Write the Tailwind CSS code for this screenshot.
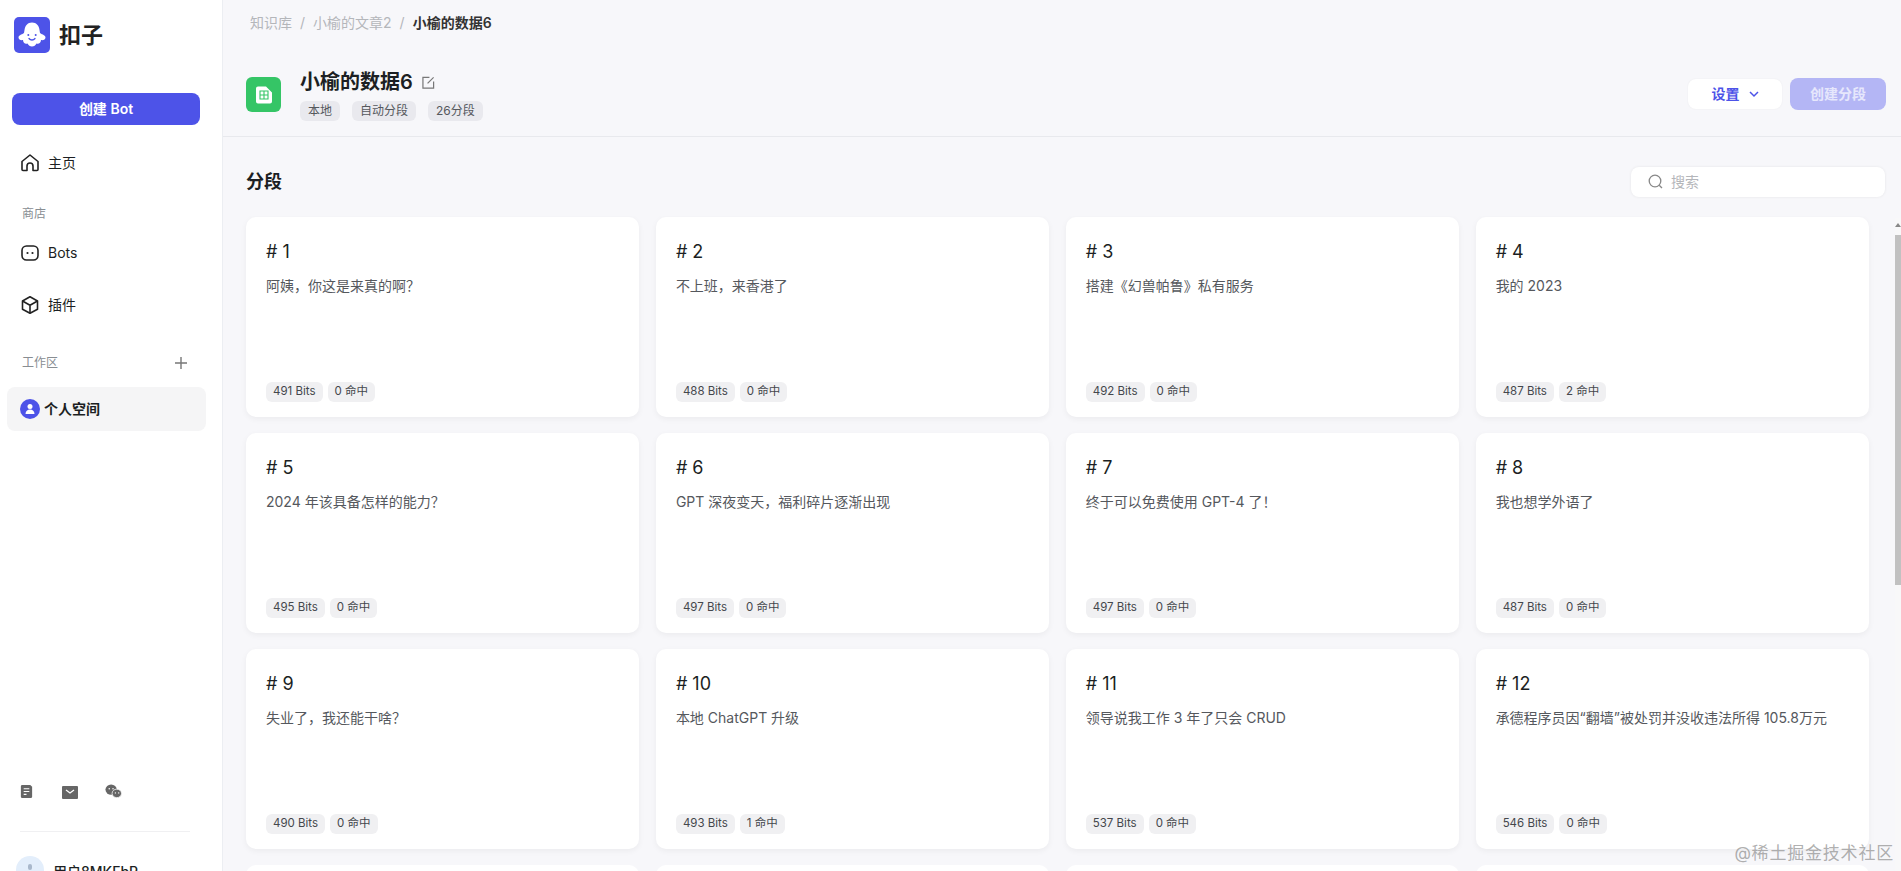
<!DOCTYPE html>
<html lang="zh-CN">
<head>
    <meta charset="UTF-8">
    <meta name="viewport" content="width=device-width, initial-scale=1.0">
    <title>扣子 - 小榆的数据6</title>
    <script src="https://cdn.jsdelivr.net/npm/@tailwindcss/browser@4"></script>
</head>
<body class="h-[871px] overflow-hidden bg-[#f7f7fa] font-['Inter','Noto_Sans_CJK_SC',sans-serif] text-[#1c1f23]">
    <div class="flex h-full">
        <!-- 侧边栏 -->
        <aside class="flex h-full w-[223px] shrink-0 flex-col border-r border-[#eceef2] bg-white">
            <div class="flex items-center pl-[14px] pt-[17px]">
                <svg class="size-9" viewBox="0 0 36 36">
                    <rect width="36" height="36" rx="5" fill="#4d53e8"/>
                    <path d="M18 5.500c-4.500 0-7 3.200-7.500 7.500l-.5 3c-.5 1-5.500 1.800-5.500 4.500 0 2 2.200 3 4.500 2.500 0 3 2.500 4.500 4.500 3.500 1 2 2.500 3 4.500 3s3.500-1 4.500-3c2 1 4.500-.5 4.500-3.500 2.300.5 4.500-.5 4.500-2.500 0-2.700-5-3.500-5.500-4.500l-.5-3c-.5-4.300-3-7.500-7.500-7.500z" fill="#fff"/>
                    <circle cx="14.300" cy="18" r="1" fill="#4d53e8"/>
                    <circle cx="21.700" cy="18" r="1" fill="#4d53e8"/>
                    <path d="M15 21.500c1.500 2 4.500 2 6 0" fill="none" stroke="#4d53e8" stroke-width="1.300" stroke-linecap="round"/>
                </svg>
                <span class="ml-[9px] text-[22px] font-bold leading-9 text-[#222]">扣子</span>
            </div>
            <button class="mx-3 mt-[40px] h-8 w-[188px] shrink-0 rounded-lg bg-[#4d53e8] text-sm font-semibold text-white">创建 Bot</button>

            <a class="mt-[26px] flex h-[24px] items-center pl-5 text-sm">
                <svg class="mr-2 size-[20px]" viewBox="0 0 20 20" fill="none" stroke="#222" stroke-width="1.600" stroke-linejoin="round"><path d="M2 8.500 10 2l8 6.500v8a1 1 0 0 1-1 1H13v-4.500a3 3 0 0 0-6 0v4.500H3a1 1 0 0 1-1-1z"/></svg>
                主页
            </a>
            <div class="mt-[29px] pl-[22px] text-xs leading-5 text-[#888d92]">商店</div>

            <a class="mt-[17px] flex h-[24px] items-center pl-5 text-sm">
                <svg class="mr-2 size-[20px]" viewBox="0 0 20 20" fill="none"><rect x="2" y="3" width="16" height="14" rx="4.500" stroke="#222" stroke-width="1.600"/><circle cx="7.500" cy="10" r="1.100" fill="#222"/><circle cx="12.500" cy="10" r="1.100" fill="#222"/></svg>
                Bots
            </a>
            <a class="mt-[28px] flex h-[24px] items-center pl-5 text-sm">
                <svg class="mr-2 size-[20px]" viewBox="0 0 20 20" fill="none" stroke="#222" stroke-width="1.600" stroke-linejoin="round"><path d="M10 1.800 17.500 6v8.200L10 18.300l-7.500-4.100V6z"/><path d="M2.500 6 10 10.200 17.500 6M10 10.200v8"/></svg>
                插件
            </a>

            <div class="mt-[36px] flex items-center justify-between pl-[22px] pr-[35px] text-xs leading-5 text-[#888d92]">
                工作区
                <svg class="size-3" viewBox="0 0 12 12" stroke="#777" stroke-width="1.400"><path d="M6 0v12M0 6h12"/></svg>
            </div>
            <div class="ml-[7px] mt-[14px] flex h-[44px] w-[199px] shrink-0 items-center rounded-lg bg-[#f5f5f6] pl-[13px] text-sm font-semibold">
                <svg class="mr-1 size-5" viewBox="0 0 20 20"><circle cx="10" cy="10" r="10" fill="#4d53e8"/><circle cx="10" cy="7.500" r="2.500" fill="#fff"/><path d="M5.500 15c0-3 2-4.500 4.500-4.500s4.500 1.500 4.500 4.500z" fill="#fff"/></svg>
                个人空间
            </div>

            <div class="mt-auto flex items-center pl-[19px]">
                <svg class="size-[15px]" viewBox="0 0 16 16"><path d="M2 2.500A1.500 1.500 0 0 1 3.500 1H12l2 2v10.500a1.500 1.500 0 0 1-1.500 1.500h-9A1.500 1.500 0 0 1 2 13.500z" fill="#666"/><path d="M5 5h6M5 8h6M5 11h3" stroke="#fff" stroke-width="1.200"/></svg>
                <svg class="ml-[28px] size-4" viewBox="0 0 16 16"><rect y="2" width="16" height="13" rx="1" fill="#666"/><path d="m4 6 4 3 4-3" fill="none" stroke="#fff" stroke-width="1.300"/></svg>
                <svg class="ml-[27px] size-[17px]" viewBox="0 0 18 18"><ellipse cx="6.500" cy="7" rx="6" ry="5.500" fill="#666"/><ellipse cx="12.500" cy="11" rx="5" ry="4.500" fill="#666" stroke="#fff" stroke-width=".8"/><circle cx="4.500" cy="6" r=".8" fill="#fff"/><circle cx="8.500" cy="6" r=".8" fill="#fff"/><circle cx="11" cy="10.500" r=".7" fill="#fff"/><circle cx="14.500" cy="10.500" r=".7" fill="#fff"/></svg>
            </div>
            <div class="ml-5 mt-[31px] h-px w-[170px] shrink-0 bg-[#f0f0f2]"></div>
            <div class="mt-[24px] flex h-[15px] shrink-0 items-start overflow-hidden pl-4">
                <div class="flex size-7 shrink-0 justify-center rounded-full bg-[#e3eefb] pt-[8px]">
                    <span class="h-[6px] w-[4px] rounded-full bg-[#a9b8cb]"></span>
                </div>
                <span class="ml-[9px] mt-[6px] text-sm font-medium leading-5">用户8MKFbR</span>
            </div>
        </aside>

        <!-- 主内容 -->
        <main class="relative flex h-full min-w-0 flex-1 flex-col">
            <nav class="flex h-[46px] shrink-0 items-center pl-[27px] text-sm text-[#b4b6ba]">
                <span>知识库</span>
                <span class="mx-2">/</span>
                <span>小榆的文章2</span>
                <span class="mx-2">/</span>
                <span class="font-semibold text-[#333]">小榆的数据6</span>
            </nav>

            <header class="flex h-[91px] shrink-0 items-start justify-between border-b border-[#e8e9ed] pl-[23px] pr-[15px]">
                <div class="flex">
                    <div class="mt-[31px] flex size-[35px] items-center justify-center rounded-[6px] bg-[#35c566]">
                        <svg class="size-[18px]" viewBox="0 0 18 18">
                            <path d="M1 2.500A2 2 0 0 1 3 .5h8l6 6v9a2 2 0 0 1-2 2H3a2 2 0 0 1-2-2z" fill="#fff"/>
                            <path d="M5 5h8v8H5zM9 5v8M5 9h8" fill="none" stroke="#35c566" stroke-width="1.100"/>
                        </svg>
                    </div>
                    <div class="ml-[19px] mt-[22px]">
                        <div class="flex items-center">
                            <span class="text-[20px] font-semibold leading-[28px] text-[#1c1f23]">小榆的数据6</span>
                            <svg class="ml-[9px] size-[13px]" viewBox="0 0 14 14" fill="none" stroke="#777" stroke-width="1.300"><path d="M8 1.500H1v11.500h11.500V6"/><path d="M6 8 12.500 1.500"/></svg>
                        </div>
                        <div class="mt-[5px] flex gap-[12px] text-xs text-[#55585d]">
                            <span class="flex h-5 items-center rounded-md bg-[#e9e9ee] px-2">本地</span>
                            <span class="flex h-5 items-center rounded-md bg-[#e9e9ee] px-2">自动分段</span>
                            <span class="flex h-5 items-center rounded-md bg-[#e9e9ee] px-2">26分段</span>
                        </div>
                    </div>
                </div>
                <div class="mt-[32px] flex items-center gap-2">
                    <button class="flex h-[30px] w-[94px] items-center justify-center rounded-lg bg-white text-sm font-semibold text-[#4d53e8] shadow-[0_0_2px_rgba(0,0,0,0.06)]">
                        设置
                        <svg class="ml-[9px] size-[10px]" viewBox="0 0 10 10" fill="none" stroke="#4d53e8" stroke-width="1.500"><path d="m1 3 4 4 4-4"/></svg>
                    </button>
                    <button class="h-[32px] w-[96px] rounded-lg bg-[#b4b6f5] text-sm font-semibold text-[#e6e7fc]">创建分段</button>
                </div>
            </header>

            <div class="flex h-[79px] shrink-0 items-center justify-between pl-[23px] pr-[16px] pt-[10px]">
                <h2 class="text-[18px] font-semibold">分段</h2>
                <div class="flex h-[30px] w-[254px] items-center rounded-lg bg-white pl-[17px] text-sm text-[#b4b6ba] shadow-[0_0_3px_rgba(0,0,0,0.08)]">
                    <svg class="mr-2 size-[15px]" viewBox="0 0 15 15" fill="none" stroke="#888" stroke-width="1.300"><circle cx="7" cy="7" r="5.800"/><path d="m11.200 11.200 2.800 2.800"/></svg>
                    搜索
                </div>
            </div>

            <!-- 分段卡片 -->
            <div class="grid min-h-0 flex-1 grid-cols-4 content-start gap-x-[16.5px] gap-y-[16px] overflow-hidden pl-[23px] pr-[32px] pt-[1px]">
                <article class="flex h-[200px] flex-col rounded-[10px] bg-white px-5 pb-[15px] pt-[23px] shadow-[0_2px_6px_rgba(0,0,0,0.05)]">
                    <h3 class="text-[18px] leading-6"># 1</h3>
                    <p class="mt-[12px] text-sm leading-5 text-[#55585d]">阿姨，你这是来真的啊？</p>
                    <div class="mt-auto flex gap-[5px] text-[11.500px] text-[#44474c]"><span class="flex h-5 items-center rounded-md bg-[#f0f0f2] px-[7px]">491 Bits</span><span class="flex h-5 items-center rounded-md bg-[#f0f0f2] px-[7px]">0 命中</span></div>
                </article>
                <article class="flex h-[200px] flex-col rounded-[10px] bg-white px-5 pb-[15px] pt-[23px] shadow-[0_2px_6px_rgba(0,0,0,0.05)]">
                    <h3 class="text-[18px] leading-6"># 2</h3>
                    <p class="mt-[12px] text-sm leading-5 text-[#55585d]">不上班，来香港了</p>
                    <div class="mt-auto flex gap-[5px] text-[11.500px] text-[#44474c]"><span class="flex h-5 items-center rounded-md bg-[#f0f0f2] px-[7px]">488 Bits</span><span class="flex h-5 items-center rounded-md bg-[#f0f0f2] px-[7px]">0 命中</span></div>
                </article>
                <article class="flex h-[200px] flex-col rounded-[10px] bg-white px-5 pb-[15px] pt-[23px] shadow-[0_2px_6px_rgba(0,0,0,0.05)]">
                    <h3 class="text-[18px] leading-6"># 3</h3>
                    <p class="mt-[12px] text-sm leading-5 text-[#55585d]">搭建《幻兽帕鲁》私有服务</p>
                    <div class="mt-auto flex gap-[5px] text-[11.500px] text-[#44474c]"><span class="flex h-5 items-center rounded-md bg-[#f0f0f2] px-[7px]">492 Bits</span><span class="flex h-5 items-center rounded-md bg-[#f0f0f2] px-[7px]">0 命中</span></div>
                </article>
                <article class="flex h-[200px] flex-col rounded-[10px] bg-white px-5 pb-[15px] pt-[23px] shadow-[0_2px_6px_rgba(0,0,0,0.05)]">
                    <h3 class="text-[18px] leading-6"># 4</h3>
                    <p class="mt-[12px] text-sm leading-5 text-[#55585d]">我的 2023</p>
                    <div class="mt-auto flex gap-[5px] text-[11.500px] text-[#44474c]"><span class="flex h-5 items-center rounded-md bg-[#f0f0f2] px-[7px]">487 Bits</span><span class="flex h-5 items-center rounded-md bg-[#f0f0f2] px-[7px]">2 命中</span></div>
                </article>
                <article class="flex h-[200px] flex-col rounded-[10px] bg-white px-5 pb-[15px] pt-[23px] shadow-[0_2px_6px_rgba(0,0,0,0.05)]">
                    <h3 class="text-[18px] leading-6"># 5</h3>
                    <p class="mt-[12px] text-sm leading-5 text-[#55585d]">2024 年该具备怎样的能力？</p>
                    <div class="mt-auto flex gap-[5px] text-[11.500px] text-[#44474c]"><span class="flex h-5 items-center rounded-md bg-[#f0f0f2] px-[7px]">495 Bits</span><span class="flex h-5 items-center rounded-md bg-[#f0f0f2] px-[7px]">0 命中</span></div>
                </article>
                <article class="flex h-[200px] flex-col rounded-[10px] bg-white px-5 pb-[15px] pt-[23px] shadow-[0_2px_6px_rgba(0,0,0,0.05)]">
                    <h3 class="text-[18px] leading-6"># 6</h3>
                    <p class="mt-[12px] text-sm leading-5 text-[#55585d]">GPT 深夜变天，福利碎片逐渐出现</p>
                    <div class="mt-auto flex gap-[5px] text-[11.500px] text-[#44474c]"><span class="flex h-5 items-center rounded-md bg-[#f0f0f2] px-[7px]">497 Bits</span><span class="flex h-5 items-center rounded-md bg-[#f0f0f2] px-[7px]">0 命中</span></div>
                </article>
                <article class="flex h-[200px] flex-col rounded-[10px] bg-white px-5 pb-[15px] pt-[23px] shadow-[0_2px_6px_rgba(0,0,0,0.05)]">
                    <h3 class="text-[18px] leading-6"># 7</h3>
                    <p class="mt-[12px] text-sm leading-5 text-[#55585d]">终于可以免费使用 GPT-4 了！</p>
                    <div class="mt-auto flex gap-[5px] text-[11.500px] text-[#44474c]"><span class="flex h-5 items-center rounded-md bg-[#f0f0f2] px-[7px]">497 Bits</span><span class="flex h-5 items-center rounded-md bg-[#f0f0f2] px-[7px]">0 命中</span></div>
                </article>
                <article class="flex h-[200px] flex-col rounded-[10px] bg-white px-5 pb-[15px] pt-[23px] shadow-[0_2px_6px_rgba(0,0,0,0.05)]">
                    <h3 class="text-[18px] leading-6"># 8</h3>
                    <p class="mt-[12px] text-sm leading-5 text-[#55585d]">我也想学外语了</p>
                    <div class="mt-auto flex gap-[5px] text-[11.500px] text-[#44474c]"><span class="flex h-5 items-center rounded-md bg-[#f0f0f2] px-[7px]">487 Bits</span><span class="flex h-5 items-center rounded-md bg-[#f0f0f2] px-[7px]">0 命中</span></div>
                </article>
                <article class="flex h-[200px] flex-col rounded-[10px] bg-white px-5 pb-[15px] pt-[23px] shadow-[0_2px_6px_rgba(0,0,0,0.05)]">
                    <h3 class="text-[18px] leading-6"># 9</h3>
                    <p class="mt-[12px] text-sm leading-5 text-[#55585d]">失业了，我还能干啥？</p>
                    <div class="mt-auto flex gap-[5px] text-[11.500px] text-[#44474c]"><span class="flex h-5 items-center rounded-md bg-[#f0f0f2] px-[7px]">490 Bits</span><span class="flex h-5 items-center rounded-md bg-[#f0f0f2] px-[7px]">0 命中</span></div>
                </article>
                <article class="flex h-[200px] flex-col rounded-[10px] bg-white px-5 pb-[15px] pt-[23px] shadow-[0_2px_6px_rgba(0,0,0,0.05)]">
                    <h3 class="text-[18px] leading-6"># 10</h3>
                    <p class="mt-[12px] text-sm leading-5 text-[#55585d]">本地 ChatGPT 升级</p>
                    <div class="mt-auto flex gap-[5px] text-[11.500px] text-[#44474c]"><span class="flex h-5 items-center rounded-md bg-[#f0f0f2] px-[7px]">493 Bits</span><span class="flex h-5 items-center rounded-md bg-[#f0f0f2] px-[7px]">1 命中</span></div>
                </article>
                <article class="flex h-[200px] flex-col rounded-[10px] bg-white px-5 pb-[15px] pt-[23px] shadow-[0_2px_6px_rgba(0,0,0,0.05)]">
                    <h3 class="text-[18px] leading-6"># 11</h3>
                    <p class="mt-[12px] text-sm leading-5 text-[#55585d]">领导说我工作 3 年了只会 CRUD</p>
                    <div class="mt-auto flex gap-[5px] text-[11.500px] text-[#44474c]"><span class="flex h-5 items-center rounded-md bg-[#f0f0f2] px-[7px]">537 Bits</span><span class="flex h-5 items-center rounded-md bg-[#f0f0f2] px-[7px]">0 命中</span></div>
                </article>
                <article class="flex h-[200px] flex-col rounded-[10px] bg-white px-5 pb-[15px] pt-[23px] shadow-[0_2px_6px_rgba(0,0,0,0.05)]">
                    <h3 class="text-[18px] leading-6"># 12</h3>
                    <p class="mt-[12px] text-sm leading-5 text-[#55585d]">承德程序员因“翻墙”被处罚并没收违法所得 105.8万元</p>
                    <div class="mt-auto flex gap-[5px] text-[11.500px] text-[#44474c]"><span class="flex h-5 items-center rounded-md bg-[#f0f0f2] px-[7px]">546 Bits</span><span class="flex h-5 items-center rounded-md bg-[#f0f0f2] px-[7px]">0 命中</span></div>
                </article>
                <article class="h-[200px] rounded-[10px] bg-white"></article>
                <article class="h-[200px] rounded-[10px] bg-white"></article>
                <article class="h-[200px] rounded-[10px] bg-white"></article>
                <article class="h-[200px] rounded-[10px] bg-white"></article>
            </div>

            <!-- 滚动条 -->
            <div class="absolute bottom-0 right-0 top-[218px] flex w-[6px] flex-col bg-[#f8f8f9]">
                <svg class="mt-[5px] h-[4px] w-[6px]" viewBox="0 0 6 4"><path d="M3 0 6 4H0z" fill="#888"/></svg>
                <div class="mt-[8px] h-[350px] bg-[#c1c1c1]"></div>
            </div>
            <div class="absolute bottom-[6px] right-[7px] text-[17px] leading-6 tracking-[0.8px] text-[#9a9a9a]/80">@稀土掘金技术社区</div>
        </main>
    </div>
</body>
</html>
